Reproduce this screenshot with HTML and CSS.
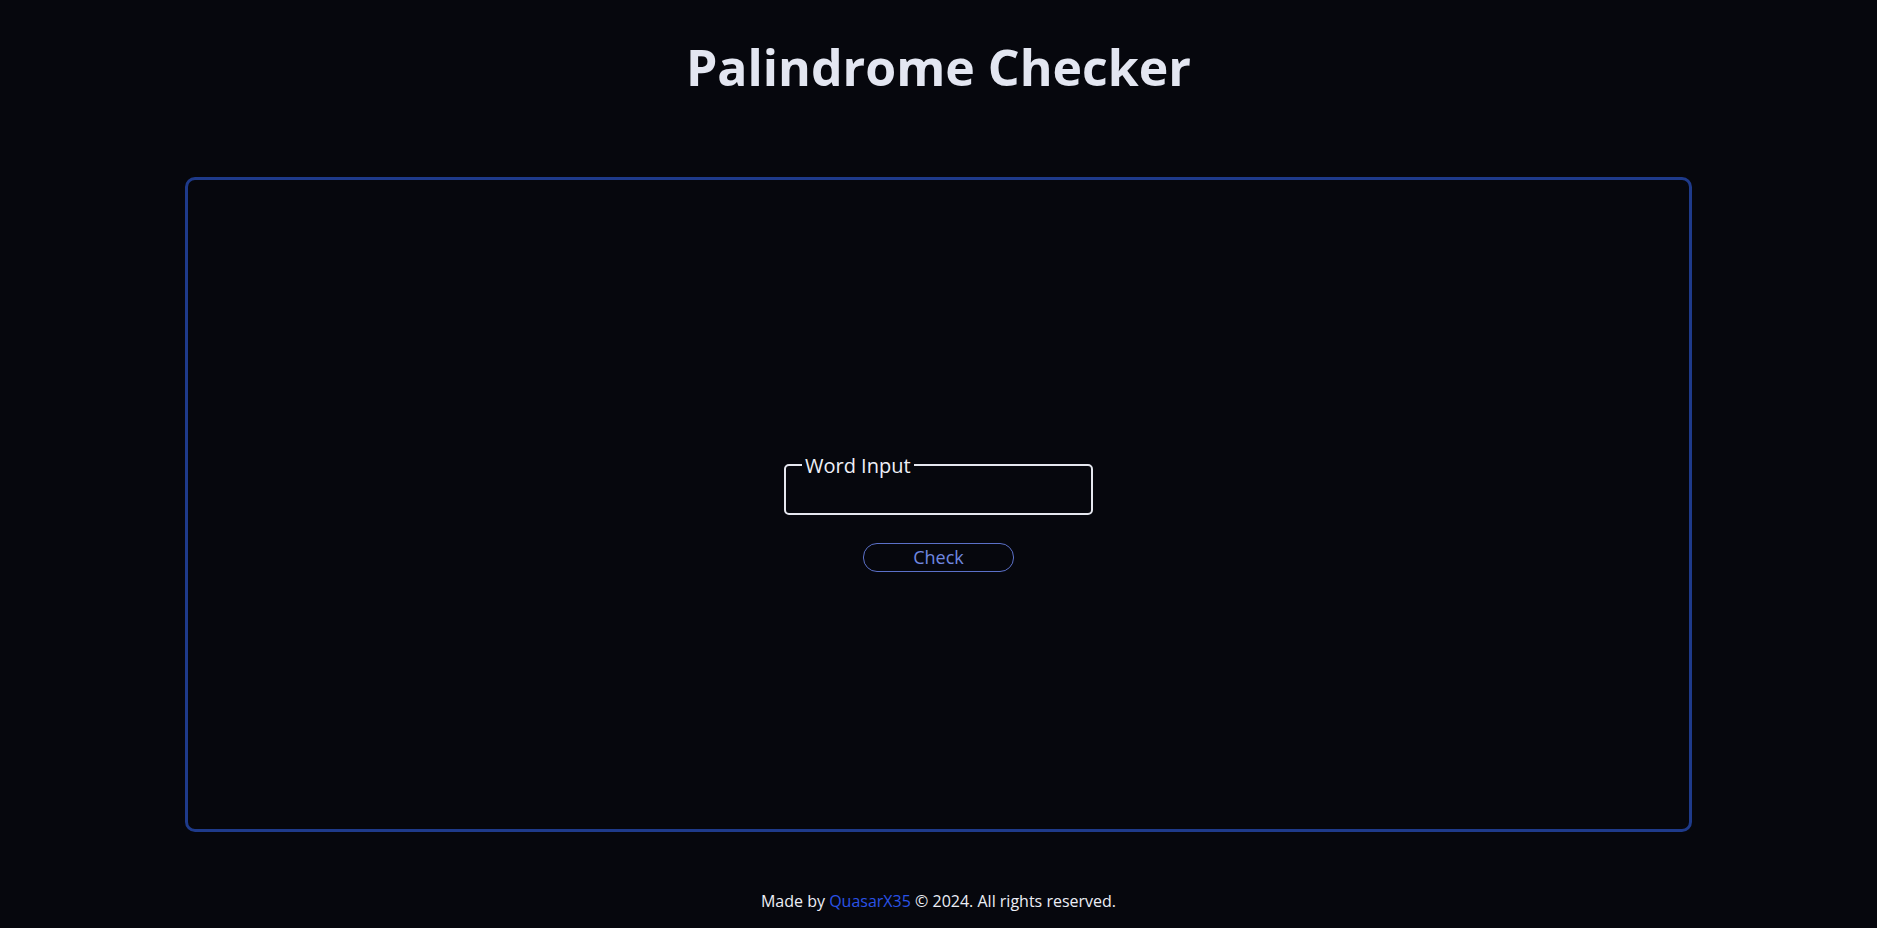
FILE: index.html
```html
<!DOCTYPE html>
<html lang="en">
<head>
<meta charset="utf-8">
<title>Palindrome Checker</title>
<link rel="stylesheet" href="styles.css">
</head>
<body>
  <header class="header">
    <h1 class="title">Palindrome Checker</h1>
  </header>
  <main class="panel">
    <div class="form">
      <fieldset class="field">
        <legend class="field-label">Word Input</legend>
        <input class="field-input" type="text" id="text-input">
      </fieldset>
      <button class="check-btn" id="check-btn">Check</button>
    </div>
  </main>
  <footer class="footer">
    Made by <a class="footer-link" href="#">QuasarX35</a> © 2024. All rights reserved.
  </footer>
</body>
</html>
```
FILE: styles.css
```css
* { box-sizing: border-box; }
html, body { margin: 0; padding: 0; }
body {
  background: #06070d;
  color: #e5e7ef;
  font-family: "Open Sans", "Noto Sans", sans-serif;
  height: 928px;
  display: flex;
  flex-direction: column;
  align-items: center;
}
.header { padding-top: 33px; }
.title {
  margin: 0;
  font-size: 50px;
  font-weight: 700;
  line-height: 68px;
  color: #e3e6f1;
}
.panel {
  margin-top: 76px;
  width: 1507px;
  height: 655px;
  border: 3px solid #1e3a8a;
  border-radius: 10px;
  display: flex;
  align-items: center;
  justify-content: center;
  padding-top: 14px;
}
.form {
  display: flex;
  flex-direction: column;
  align-items: center;
}
.field {
  width: 309px;
  margin: 0;
  padding: 0 16px;
  border: 2px solid #e5e7ef;
  border-radius: 5px;
}
.field-label {
  padding: 0 3px;
  font-size: 20px;
  line-height: 27px;
  color: #eef0f8;
}
.field-input {
  display: block;
  width: 100%;
  height: 34px;
  border: none;
  outline: none;
  background: transparent;
  color: #e5e7ef;
  font-family: inherit;
  font-size: 16px;
}
.check-btn {
  margin-top: 28px;
  width: 151px;
  height: 29px;
  border: 1px solid #5b70c8;
  border-radius: 14px;
  background: transparent;
  color: #7088e0;
  font-family: "Open Sans", "Noto Sans", sans-serif;
  font-size: 18px;
  line-height: 24px;
  padding: 0;
}
.footer {
  margin-top: 58px;
  font-size: 16px;
  line-height: 22px;
  color: #eceef6;
}
.footer-link {
  color: #2a52e6;
  text-decoration: none;
}
```
